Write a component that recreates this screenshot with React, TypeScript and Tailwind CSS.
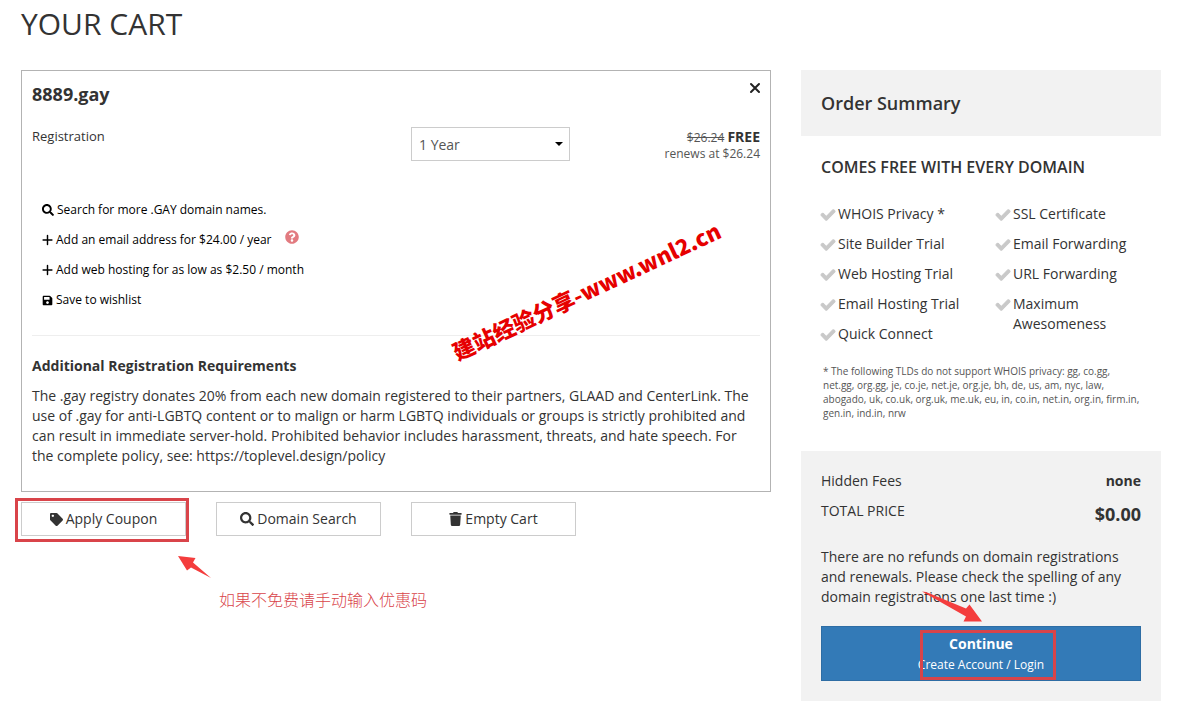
import { FaCheck, FaQuestionCircle, FaSave, FaSearch, FaTag, FaTrash } from "react-icons/fa";

const included = ["WHOIS Privacy *", "Site Builder Trial", "Web Hosting Trial", "Email Hosting Trial", "Quick Connect"];
const extras = ["SSL Certificate", "Email Forwarding", "URL Forwarding", "Maximum Awesomeness"];

function PlusIcon() {
  return (
    <svg viewBox="0 0 12 12" className="h-3 w-[11px] shrink-0" fill="none" stroke="currentColor" strokeWidth="1.6" strokeLinecap="round" aria-hidden="true">
      <path d="M6 1.2v9.6M1.200 6h9.600" />
    </svg>
  );
}

function CloseIcon() {
  return (
    <svg viewBox="0 0 12 12" className="size-3" fill="none" stroke="currentColor" strokeWidth="2" strokeLinecap="round" aria-hidden="true">
      <path d="M2 2l8 8M10 2l-8 8" />
    </svg>
  );
}

function FeatureList({ items }: { items: string[] }) {
  return (
    <ul className="flex flex-col gap-[10px]">
      {items.map((item) => (
        <li key={item} className="flex gap-[3px]">
          <FaCheck className="mt-1 size-[14px] shrink-0 overflow-visible stroke-[#c9c9c9] stroke-[40] text-[#c9c9c9]" aria-hidden="true" />
          <span>{item}</span>
        </li>
      ))}
    </ul>
  );
}

const link = "flex items-center gap-[3px] text-black";
const action = "flex h-[34px] w-full items-center justify-center gap-[3px] border border-[#ccc] bg-white";

export default function App() {
  return (
    <main className="bg-white pr-[43px] pl-[21px] font-['Open_Sans','Noto_Sans_CJK_SC',sans-serif] text-[14px] leading-5 text-[#333]">
      <h1 className="pt-[7px] text-[30px] leading-[33px]">YOUR CART</h1>

      <div className="mt-[30px] grid grid-cols-[25fr_12fr] items-start gap-[30px]">
        <div>
          <section className="relative border border-[#b3b3b3] px-[10px] pt-[11px] pb-[25px]">
            <div className="flex items-start justify-between">
              <h2 className="pt-[2px] text-[18px] leading-5 font-bold">8889.gay</h2>
              <button type="button" aria-label="Remove 8889.gay" className="-mr-px text-[#222]">
                <CloseIcon />
              </button>
            </div>

            <div className="mt-[23px] grid grid-cols-[379px_159px_1fr] items-start">
              <label htmlFor="term" className="text-[13px] leading-[18px]">Registration</label>
              <div className="relative">
                <select id="term" className="h-[34px] w-full appearance-none border border-[#ccc] bg-white px-[7px] pt-[2px] text-[14px] text-[#555]">
                  <option>1 Year</option>
                </select>
                <svg viewBox="0 0 8 4" className="pointer-events-none absolute top-[15px] right-[7px] h-1 w-2" aria-hidden="true">
                  <path d="M0 0h8L4 4z" fill="#000" />
                </svg>
              </div>
              <p className="pt-[2px] text-right text-[12px] leading-4 text-[#555]">
                <s>$26.24</s> <strong className="text-[14px] leading-4 text-[#333]">FREE</strong>
                <br />
                renews at $26.24
              </p>
            </div>

            <ul className="mt-[38px] flex flex-col gap-[10px] pl-[10px] text-[12px]">
              <li className="flex">
                <a href="#search" className={link}><FaSearch className="size-3" aria-hidden="true" />Search for more .GAY domain names.</a>
              </li>
              <li className="flex gap-[14px]">
                <a href="#email" className={link}><PlusIcon />Add an email address for $24.00 / year</a>
                <FaQuestionCircle className="size-[14px] text-[#e27b80]" aria-hidden="true" />
              </li>
              <li className="flex">
                <a href="#hosting" className={link}><PlusIcon />Add web hosting for as low as $2.50 / month</a>
              </li>
              <li className="flex">
                <a href="#wishlist" className={link}><FaSave className="size-[11px]" aria-hidden="true" />Save to wishlist</a>
              </li>
            </ul>

            <hr className="mt-[25px] border-[#eee]" />
            <h3 className="mt-5 font-bold">Additional Registration Requirements</h3>
            <p className="mt-[10px]">
              The .gay registry donates 20% from each new domain registered to their partners, GLAAD and CenterLink. The use of .gay for anti-LGBTQ content or to malign or harm LGBTQ individuals or groups is strictly prohibited and can result in immediate server-hold. Prohibited behavior includes harassment, threats, and hate speech. For the complete policy, see: https://toplevel.design/policy
            </p>

            <p className="absolute top-[207px] left-[412px] w-[304px] -rotate-[25deg] text-center font-['Noto_Sans_CJK_SC',sans-serif] text-[22px] leading-6 font-black whitespace-nowrap text-[#e60000]">
              建站经验分享-www.wnl2.cn
            </p>
          </section>

          <div className="mt-[10px] grid grid-cols-[165px_165px_165px] gap-[30px]">
            <div className="relative">
              <button type="button" className={action}><FaTag className="size-[13px]" aria-hidden="true" />Apply Coupon</button>
              <div className="pointer-events-none absolute -top-1 -right-[3px] -bottom-[6px] -left-[6px] border-3 border-[#d9444a]" />
              <svg viewBox="0 0 34 24" className="pointer-events-none absolute top-[53px] left-[156px] h-6 w-[34px]" aria-hidden="true">
                <path d="M1 1l17.500 2-2.500 4.500L34 23 14 12.500 10 15.500z" fill="#f43d3d" />
              </svg>
              <p className="absolute top-[87px] left-[198px] font-['Noto_Sans_CJK_SC',sans-serif] text-[16px] font-light whitespace-nowrap text-[#d9444a]">如果不免费请手动输入优惠码</p>
            </div>
            <button type="button" className={action}><FaSearch className="size-[14px]" aria-hidden="true" />Domain Search</button>
            <button type="button" className={action}><FaTrash className="h-[14px] w-[13px]" aria-hidden="true" />Empty Cart</button>
          </div>
        </div>

        <aside>
          <h2 className="bg-[#f2f2f2] px-5 py-[23px] text-[18px] leading-5 font-semibold">Order Summary</h2>
          <div className="px-5 pt-[22px]">
            <h3 className="text-[16px] leading-[18px] font-semibold">COMES FREE WITH EVERY DOMAIN</h3>
            <div className="mt-[28px] grid grid-cols-2 gap-[30px]">
              <FeatureList items={included} />
              <FeatureList items={extras} />
            </div>
            <p className="mt-5 pl-[2px] text-[10px] leading-[14px] text-[#555]">
              * The following TLDs do not support WHOIS privacy: gg, co.gg, net.gg, org.gg, je, co.je, net.je, org.je, bh, de, us, am, nyc, law, abogado, uk, co.uk, org.uk, me.uk, eu, in, co.in, net.in, org.in, firm.in, gen.in, ind.in, nrw
            </p>
          </div>

          <div className="mt-[31px] bg-[#f2f2f2] p-5">
            <dl className="flex flex-col gap-[10px]">
              <div className="flex justify-between">
                <dt>Hidden Fees</dt>
                <dd className="font-bold">none</dd>
              </div>
              <div className="flex justify-between">
                <dt>TOTAL PRICE</dt>
                <dd className="pt-[3px] text-[18px] font-bold">$0.00</dd>
              </div>
            </dl>
            <p className="mt-[23px]">There are no refunds on domain registrations and renewals. Please check the spelling of any domain registrations one last time :)</p>
            <div className="relative mt-[19px]">
              <button type="button" className="flex w-full flex-col items-center border border-[#2e6da4] bg-[#337ab7] pt-[6px] pb-[5px] text-white">
                <strong className="leading-[22px]">Continue</strong>
                <span className="text-[12px] leading-5">Create Account / Login</span>
              </button>
              <div className="pointer-events-none absolute top-1 left-[99px] h-[50px] w-[136px] border-3 border-[#d9444a]" />
              <svg viewBox="0 0 62 32" className="pointer-events-none absolute -top-[35px] left-[101px] h-8 w-[62px]" aria-hidden="true">
                <path d="M0 .5L4 1 44 17.500l3.500-4L60 30.500H41.500l2.500-5z" fill="#f43d3d" />
              </svg>
            </div>
          </div>
        </aside>
      </div>
    </main>
  );
}
